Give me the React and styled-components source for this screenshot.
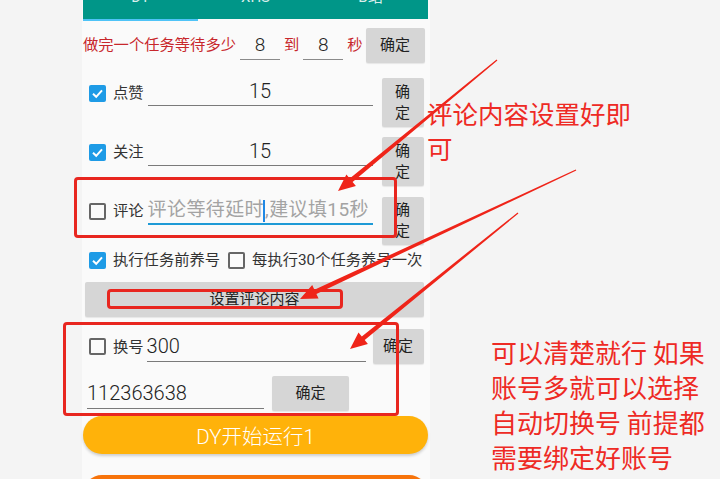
import React from 'react';
import styled, { createGlobalStyle } from 'styled-components';

const GlobalStyle = createGlobalStyle`
  html, body {
    margin: 0;
    padding: 0;
  }
  body {
    background: #f4f4f4;
    font-family: "Roboto", "Noto Sans CJK SC", sans-serif;
    overflow: hidden;
  }
`;

const Stage = styled.div`
  position: relative;
  width: 720px;
  height: 479px;
  overflow: hidden;
  background: #f4f4f4;
`;

const Screen = styled.div`
  margin-left: 82px;
  width: 348px;
  height: 100%;
  padding-left: 1px;
  box-sizing: border-box;
  background: #fafafa;
  display: flex;
  flex-direction: column;
`;

/* tabs (scrolled mostly off screen) */
const TabBar = styled.div`
  display: flex;
  width: 345px;
  height: 49px;
  margin-top: -28px;
  flex-shrink: 0;
`;

const Tab = styled.div`
  flex: 1;
  display: flex;
  align-items: flex-end;
  justify-content: center;
  padding-bottom: 14px;
  box-sizing: border-box;
  background: #009688;
  background-clip: padding-box;
  border-bottom: 2px solid ${(p) => (p.$active ? '#4fc3f7' : 'transparent')};
  color: rgba(255, 255, 255, 0.85);
  font-size: 15px;
  line-height: 15px;
`;

/* rows */
const WaitRow = styled.div`
  display: flex;
  align-items: center;
  height: 35px;
  margin-top: 7px;
  flex-shrink: 0;
`;

const RedText = styled.span`
  color: #c8272c;
  font-size: 15.3px;
  line-height: 1;
  margin-left: ${(p) => p.$ml || 0}px;
  white-space: nowrap;
`;

const NumField = styled.div`
  width: 40px;
  height: 28px;
  margin-left: 4px;
  border-bottom: 1px solid #8a8a8a;
  color: #222;
  font-size: 19px;
  font-weight: 300;
  line-height: 28px;
  text-align: center;
`;

const GrayButton = styled.button`
  flex-shrink: 0;
  width: ${(p) => p.$w}px;
  height: ${(p) => p.$h}px;
  margin-left: ${(p) => p.$ml || 0}px;
  padding: 0;
  border: none;
  border-radius: 2px;
  background: #d6d6d6;
  box-shadow: 0 1px 1px rgba(0, 0, 0, 0.08);
  color: #222;
  font-family: inherit;
  font-size: 15px;
  line-height: 21px;
  display: flex;
  flex-direction: column;
  align-items: center;
  justify-content: center;
`;

const FieldRow = styled.div`
  display: flex;
  align-items: flex-start;
  margin-top: ${(p) => p.$mt}px;
  flex-shrink: 0;
`;

const CheckItem = styled.div`
  display: flex;
  align-items: center;
  height: 20px;
  margin-top: ${(p) => p.$mt || 0}px;
  margin-left: ${(p) => p.$ml || 0}px;
`;

const Box = styled.span`
  width: 17px;
  height: 17px;
  box-sizing: border-box;
  border-radius: 2px;
  flex-shrink: 0;
  display: flex;
  align-items: center;
  justify-content: center;
  background: ${(p) => (p.$checked ? '#1e9be6' : 'transparent')};
  border: ${(p) => (p.$checked ? 'none' : '2px solid #666')};
`;

const Label = styled.span`
  margin-left: 7px;
  color: #333;
  font-size: 15.3px;
  line-height: 20px;
  white-space: nowrap;
`;

const LineInput = styled.div`
  width: ${(p) => p.$w}px;
  height: ${(p) => p.$h || 27}px;
  margin-left: ${(p) => p.$ml || 0}px;
  border-bottom: ${(p) => (p.$focus ? '2px solid #1e9ad6' : '1px solid #7a7a7a')};
  color: ${(p) => (p.$hint ? '#a3a3a3' : '#222')};
  font-size: ${(p) => (p.$hint ? 19 : 20)}px;
  font-weight: ${(p) => (p.$hint ? 400 : 300)};
  letter-spacing: ${(p) => (p.$hint ? '0.4px' : '0')};
  line-height: ${(p) => p.$h || 27}px;
  text-align: ${(p) => p.$align || 'center'};
  white-space: nowrap;
  flex-shrink: 0;
`;

const Caret = styled.span`
  display: inline-block;
  width: 2px;
  height: 22px;
  margin: 0 0 0 -1px;
  background: #1e88e5;
  vertical-align: middle;
`;

const OptionRow = styled.div`
  display: flex;
  align-items: center;
  height: 20px;
  margin-top: 5px;
  flex-shrink: 0;
`;

const WideButton = styled(GrayButton)`
  margin-top: 12px;
`;

const SwitchRow = styled.div`
  display: flex;
  align-items: center;
  height: 35px;
  margin-top: 12px;
  flex-shrink: 0;
`;

const RunButton = styled.button`
  flex-shrink: 0;
  width: 345px;
  height: 38px;
  margin-top: ${(p) => p.$mt}px;
  border: none;
  border-radius: 19px;
  background: ${(p) => p.$color};
  box-shadow: 0 2px 3px rgba(0, 0, 0, 0.18);
  color: #fff;
  font-family: inherit;
  font-size: 20.5px;
  font-weight: 300;
  padding: 0;
`;

/* annotation layer drawn over the screenshot */
const Overlay = styled.div`
  position: absolute;
  inset: 0;
  pointer-events: none;
`;

const RedFrame = styled.div`
  position: absolute;
  left: ${(p) => p.$x}px;
  top: ${(p) => p.$y}px;
  width: ${(p) => p.$w}px;
  height: ${(p) => p.$h}px;
  box-sizing: border-box;
  border: 3px solid #e8261f;
  border-radius: 4px;
`;

const Note = styled.div`
  position: absolute;
  left: ${(p) => p.$x}px;
  top: ${(p) => p.$y}px;
  width: ${(p) => p.$w}px;
  color: #ee2a24;
  font-family: "Noto Sans CJK SC", sans-serif;
  font-size: ${(p) => p.$size || 25.5}px;
  line-height: 35px;
  white-space: pre-line;
`;

const ArrowSvg = styled.svg`
  position: absolute;
  left: 0;
  top: 0;
`;

const arrows = [
  { x1: 497, y1: 60, x2: 338, y2: 191 },
  { x1: 576, y1: 170, x2: 300, y2: 299 },
  { x1: 518, y1: 213, x2: 350, y2: 349 },
];

function arrowPoints({ x1, y1, x2, y2 }) {
  const dx = x2 - x1;
  const dy = y2 - y1;
  const len = Math.hypot(dx, dy);
  const ux = dx / len;
  const uy = dy / len;
  const nx = -uy;
  const ny = ux;
  const head = 17;
  const bx = x2 - ux * head;
  const by = y2 - uy * head;
  const pts = [
    [x1 + nx * 0.6, y1 + ny * 0.6],
    [bx + nx * 2.3, by + ny * 2.3],
    [bx + nx * 7.5, by + ny * 7.5],
    [x2, y2],
    [bx - nx * 7.5, by - ny * 7.5],
    [bx - nx * 2.3, by - ny * 2.3],
    [x1 - nx * 0.6, y1 - ny * 0.6],
  ];
  return pts.map((p) => p.map((v) => v.toFixed(1)).join(',')).join(' ');
}

const Check = ({ checked }) => (
  <Box $checked={checked}>
    {checked && (
      <svg width="13" height="13" viewBox="0 0 13 13">
        <path d="M2 6.8 L5.2 9.8 L11 3.4" fill="none" stroke="#fff" strokeWidth="2" />
      </svg>
    )}
  </Box>
);

const Stacked = () => (
  <>
    <span>确</span>
    <span>定</span>
  </>
);

export default function App() {
  return (
    <Stage>
      <GlobalStyle />
      <Screen>
        <TabBar>
          <Tab $active>DY</Tab>
          <Tab>XHS</Tab>
          <Tab>B站</Tab>
        </TabBar>

        <WaitRow>
          <RedText>做完一个任务等待多少</RedText>
          <NumField>8</NumField>
          <RedText $ml={4}>到</RedText>
          <NumField>8</NumField>
          <RedText $ml={4}>秒</RedText>
          <GrayButton $w={59} $h={35} $ml={3}>确定</GrayButton>
        </WaitRow>

        <FieldRow $mt={15}>
          <CheckItem $mt={5} $ml={6}>
            <Check checked />
            <Label>点赞</Label>
          </CheckItem>
          <LineInput $w={225} $ml={4}>15</LineInput>
          <GrayButton $w={42} $h={49} $ml={9}><Stacked /></GrayButton>
        </FieldRow>

        <FieldRow $mt={10}>
          <CheckItem $mt={5} $ml={6}>
            <Check checked />
            <Label>关注</Label>
          </CheckItem>
          <LineInput $w={225} $ml={4} $h={28}>15</LineInput>
          <GrayButton $w={42} $h={49} $ml={9}><Stacked /></GrayButton>
        </FieldRow>

        <FieldRow $mt={11}>
          <CheckItem $mt={4} $ml={6}>
            <Check />
            <Label>评论</Label>
          </CheckItem>
          <LineInput $w={225} $ml={4} $h={26} $hint $focus $align="left">
            评论等待延时<Caret />,建议填15秒
          </LineInput>
          <GrayButton $w={42} $h={48} $ml={9}><Stacked /></GrayButton>
        </FieldRow>

        <OptionRow>
          <CheckItem $ml={6}>
            <Check checked />
            <Label>执行任务前养号</Label>
          </CheckItem>
          <CheckItem $ml={8}>
            <Check />
            <Label>每执行30个任务养号一次</Label>
          </CheckItem>
        </OptionRow>

        <WideButton $w={339} $h={35} $ml={2}>设置评论内容</WideButton>

        <SwitchRow>
          <CheckItem $ml={6}>
            <Check />
            <Label>换号</Label>
          </CheckItem>
          <LineInput $w={219} $ml={3} $h={30} $align="left">300</LineInput>
          <GrayButton $w={51} $h={35} $ml={7}>确定</GrayButton>
        </SwitchRow>

        <SwitchRow>
          <LineInput $w={177} $ml={4} $h={30} $align="left">112363638</LineInput>
          <GrayButton $w={77} $h={35} $ml={8}>确定</GrayButton>
        </SwitchRow>

        <RunButton $mt={5} $color="#ffb20a">DY开始运行1</RunButton>
        <RunButton $mt={21} $color="#f7730a" />
      </Screen>

      <Overlay>
        <RedFrame $x={74} $y={177} $w={323} $h={61} />
        <RedFrame $x={107} $y={289} $w={236} $h={20} />
        <RedFrame $x={63} $y={322} $w={336} $h={94} />
        <ArrowSvg width="720" height="479" viewBox="0 0 720 479">
          {arrows.map((a, i) => (
            <polygon key={i} points={arrowPoints(a)} fill="#ef2419" />
          ))}
        </ArrowSvg>
        <Note $x={427} $y={95} $w={215}>{'评论内容设置好即\n可'}</Note>
        <Note $x={491} $y={334} $w={230} $size={26}>
          {'可以清楚就行 如果\n账号多就可以选择\n自动切换号 前提都\n需要绑定好账号'}
        </Note>
      </Overlay>
    </Stage>
  );
}
